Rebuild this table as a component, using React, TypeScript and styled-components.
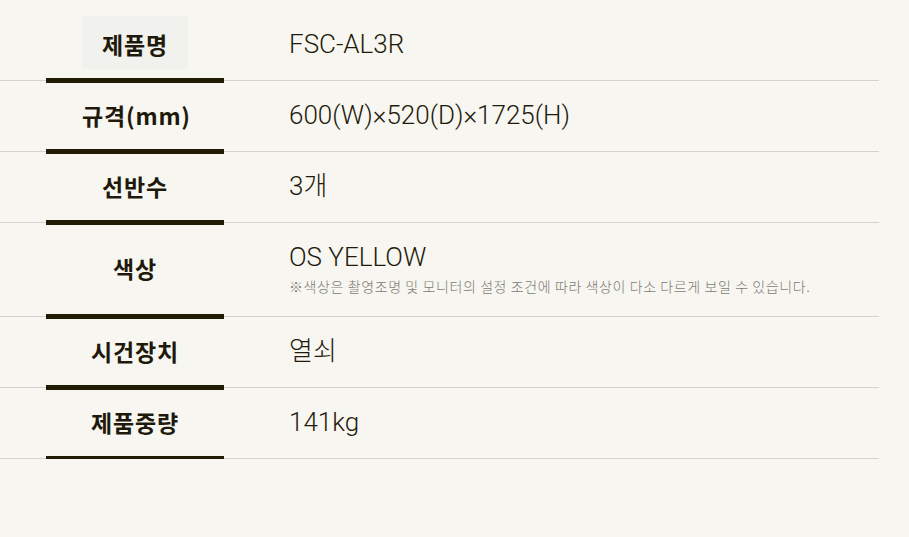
import styled, { createGlobalStyle } from "styled-components";

const GlobalStyle = createGlobalStyle`
  html, body {
    margin: 0;
    padding: 0;
    background: #f7f6f0;
  }
  body {
    font-family: Roboto, "Noto Sans CJK KR", sans-serif;
    color: #1f1a0c;
  }
`;

type Spec = {
  label: string;
  value: string;
  note?: string;
  active?: boolean;
};

const specs: Spec[] = [
  { label: "제품명", value: "FSC-AL3R", active: true },
  { label: "규격(mm)", value: "600(W)×520(D)×1725(H)" },
  { label: "선반수", value: "3개" },
  {
    label: "색상",
    value: "OS YELLOW",
    note: "※색상은 촬영조명 및 모니터의 설정 조건에 따라 색상이 다소 다르게 보일 수 있습니다.",
  },
  { label: "시건장치", value: "열쇠" },
  { label: "제품중량", value: "141kg" },
];

const Page = styled.div`
  padding-top: 10px;
  width: 879px;
`;

const Table = styled.table`
  width: 100%;
  border-collapse: collapse;
  table-layout: fixed;
`;

const Row = styled.tr`
  border-bottom: 1px solid #d5d3cd;
`;

const Head = styled.th`
  position: relative;
  width: 270px;
  padding: 0 46px;
  box-sizing: border-box;
  text-align: center;
  vertical-align: middle;

  /* thick underline sitting on the row rule */
  &::after {
    content: "";
    position: absolute;
    left: 46px;
    width: 178px;
    bottom: -3px;
    height: 5px;
    background: #221b06;
  }
`;

const Label = styled.span<{ $active?: boolean }>`
  display: block;
  width: 106px;
  margin: 0 auto 6px;
  padding: 12px 0 8px;
  font-family: "Noto Sans CJK KR", sans-serif;
  font-size: 23px;
  font-weight: 700;
  line-height: 33px;
  letter-spacing: 0.8px;
  white-space: nowrap;
  color: #1e190b;
  background: ${({ $active }) => ($active ? "#f1f1ee" : "transparent")};
`;

const Cell = styled.td`
  padding: 18px 0 19px 19px;
  vertical-align: middle;
`;

const Value = styled.div`
  font-size: 26px;
  font-weight: 300;
  line-height: 33px;
  color: #1f1a0c;
`;

const Note = styled.div`
  margin-top: 1px;
  font-size: 14px;
  line-height: 22px;
  letter-spacing: 0.6px;
  color: #7d7b76;
  font-family: "Noto Sans CJK KR", sans-serif;
  font-weight: 300;
`;

export default function App() {
  return (
    <Page>
      <GlobalStyle />
      <Table>
        <tbody>
          {specs.map((s) => (
            <Row key={s.label}>
              <Head>
                <Label $active={s.active}>{s.label}</Label>
              </Head>
              <Cell>
                <Value>{s.value}</Value>
                {s.note && <Note>{s.note}</Note>}
              </Cell>
            </Row>
          ))}
        </tbody>
      </Table>
    </Page>
  );
}
